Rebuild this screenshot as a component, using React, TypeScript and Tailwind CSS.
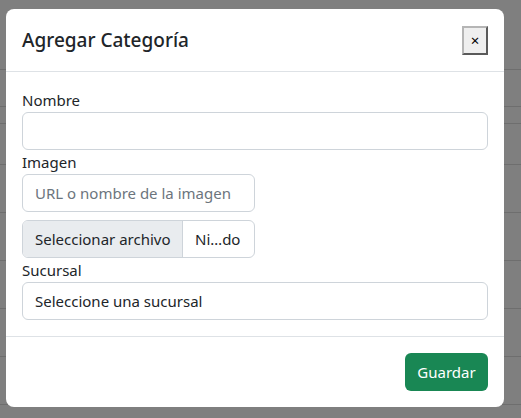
import React from "react";

const FONT = { fontFamily: '"Noto Sans", "Liberation Sans", sans-serif' };

// y positions of table row lines behind the backdrop
const ROWS = [70, 37, 17, 41, 48, 48, 48, 48, 48];

export default function App() {
  return (
    <div className="relative w-[521px] h-[418px] overflow-hidden bg-[#7f7f7f]" style={FONT}>
      {/* table behind the backdrop */}
      <div className="flex flex-col">
        {ROWS.map((h, i) => (
          <div key={i} className="border-b border-[#6e6e6e]" style={{ height: h }} />
        ))}
      </div>

      {/* modal */}
      <div className="absolute left-[6px] top-[9px] w-[498px] bg-white rounded-lg text-[#212529]">
        <div className="flex items-center justify-between px-4 py-4 border-b border-[#dee2e6]">
          <h5 className="text-[19px] leading-[30px] font-medium">Agregar Categoría</h5>
          <button className="w-[26px] h-[29px] bg-[#efefef] border-2 border-t-[#b5b5b5] border-l-[#b5b5b5] border-r-[#5a5a5a] border-b-[#5a5a5a] text-[15px] leading-none text-black flex items-center justify-center">
            ×
          </button>
        </div>

        <div className="p-4 text-[15px] leading-6 whitespace-nowrap">
          <label className="block">Nombre</label>
          <div className="h-[38px] border border-[#ced4da] rounded-md" />

          <label className="block">Imagen</label>
          <div className="w-1/2 h-[38px] border border-[#ced4da] rounded-md px-3 flex items-center text-[#6c757d]">
            URL o nombre de la imagen
          </div>

          <div className="w-1/2 mt-2 h-[38px] border border-[#ced4da] rounded-md flex overflow-hidden">
            <div className="w-[160px] shrink-0 bg-[#e9ecef] px-3 flex items-center border-r border-[#ced4da]">Seleccionar archivo</div>
            <div className="px-3 flex items-center">Ni…do</div>
          </div>

          <label className="block">Sucursal</label>
          <div className="h-[38px] border border-[#ced4da] rounded-md px-3 flex items-center">
            Seleccione una sucursal
          </div>
        </div>

        <div className="flex justify-end px-3 py-3 border-t border-[#dee2e6]">
          <button className="m-1 h-[38px] w-[83px] rounded-md bg-[#198754] text-white text-[15px]">Guardar</button>
        </div>
      </div>
    </div>
  );
}
